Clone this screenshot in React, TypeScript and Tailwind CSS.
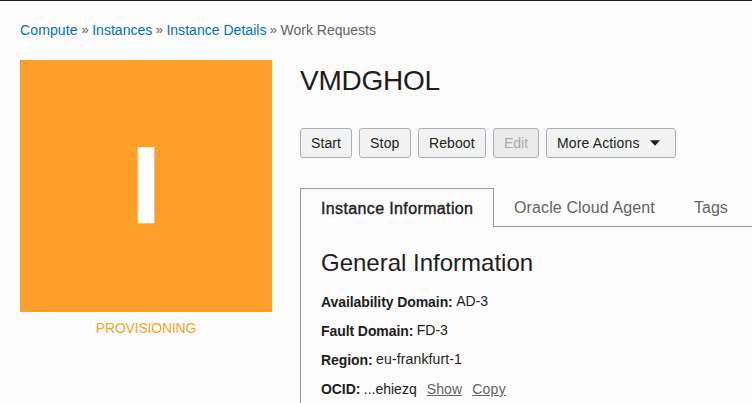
import React from "react";

const crumbs = [
  { name: "Compute", className: "w-[58px] tracking-[0.12px]" },
  { name: "Instances", className: "w-[60px] tracking-[0.03px]" },
  { name: "Instance Details", className: "w-[100px] tracking-[0.03px]" },
];

const buttonBase =
  "flex h-[30px] items-center rounded-[3px] border border-[#a7b2bc] pl-[10px] text-sm leading-4";

function Breadcrumbs() {
  return (
    <nav className="flex h-4 items-center whitespace-pre text-sm leading-4 text-[#666461]">
      {crumbs.map((crumb) => (
        <React.Fragment key={crumb.name}>
          <a className={`text-[#0070c4] ${crumb.className}`}>{crumb.name}</a>
          <span className="w-[14.2px] text-center text-[13px]">»</span>
        </React.Fragment>
      ))}
      <span>Work Requests</span>
    </nav>
  );
}

function InstanceBadge() {
  return (
    <aside className="w-[252px] shrink-0">
      <div className="flex h-[252px] items-center justify-center bg-[#fc9e28] pb-[2px]">
        <span className="text-[110px] font-bold leading-[126px] text-white [-webkit-text-stroke:0.7px_white]">
          I
        </span>
      </div>
      <div className="mt-2 text-center text-sm leading-4 tracking-[-0.2px] text-[#f9a429]">
        PROVISIONING
      </div>
    </aside>
  );
}

function Actions() {
  return (
    <div className="mt-[29px] flex">
      <button className={`${buttonBase} w-[52px] bg-[#f2f2f2] tracking-[0.1px]`}>Start</button>
      <button className={`${buttonBase} ml-[7px] w-[52px] bg-[#f2f2f2] tracking-[0.2px]`}>Stop</button>
      <button className={`${buttonBase} ml-[7px] w-[68px] bg-[#f2f2f2] tracking-[0.1px]`}>Reboot</button>
      <button className={`${buttonBase} ml-[7px] w-[46px] bg-[#ebebeb] text-[#aaaaaa]`} disabled>
        Edit
      </button>
      <button className={`${buttonBase} ml-[7px] w-[130px] bg-[#f2f2f2]`}>
        <span className="w-[93px] text-left tracking-[0.14px]">More Actions</span>
        <svg width="10" height="6" viewBox="0 0 10 6">
          <path d="M0 0.3H10L5 5.7Z" fill="#201e1c" />
        </svg>
      </button>
    </div>
  );
}

function Tabs() {
  return (
    <div className="mt-[30px] flex h-[39px] leading-[18px] text-[#666461]">
      <div className="w-[194px] border-l border-r border-t border-[#9b9b9b] pl-5 pt-[11px] text-[#201e1c]">
        <span className="tracking-[0.37px] [-webkit-text-stroke:0.4px_#201e1c]">
          Instance Information
        </span>
      </div>
      <div className="flex flex-1 border-b border-[#9b9b9b] pl-5 pt-[11px]">
        <span className="w-[180px] tracking-[0.12px]">Oracle Cloud Agent</span>
        <span>Tags</span>
      </div>
    </div>
  );
}

function Field({
  label,
  className = "",
  children,
}: {
  label: string;
  className?: string;
  children: React.ReactNode;
}) {
  return (
    <div className="flex h-[29px] items-start whitespace-pre text-sm leading-4">
      <span className="mt-px font-bold tracking-[-0.08px]">{label}</span>
      <span className={`ml-[3.5px] ${className}`}>{children}</span>
    </div>
  );
}

export default function App() {
  return (
    <div className="h-[403px] w-[752px] overflow-hidden border-t border-[#181b2a] bg-[#fbfbfb] pl-5 pt-[21px] font-['Liberation_Sans',Arial,sans-serif] text-[#201e1c]">
      <Breadcrumbs />
      <div className="mt-[22px] flex">
        <InstanceBadge />
        <main className="ml-7 min-w-0 flex-1">
          <h1 className="mt-1 h-[35px] text-[28px] leading-[33px] tracking-[-0.25px]">VMDGHOL</h1>
          <Actions />
          <Tabs />
          <section className="h-[200px] border-l border-[#9b9b9b] pl-5 pt-[22px]">
            <h2 className="h-[28px] text-2xl leading-[28px]">General Information</h2>
            <div className="mt-[16px]">
              <Field label="Availability Domain:">AD-3</Field>
              <Field label="Fault Domain:">FD-3</Field>
              <Field label="Region:" className="tracking-[0.14px]">eu-frankfurt-1</Field>
              <Field label="OCID:" className="mt-px">
                ...ehiezq
                <a className="ml-[10px] tracking-[0.1px] text-[#666461] underline">Show</a>
                <a className="ml-[10px] tracking-[0.3px] text-[#666461] underline">Copy</a>
              </Field>
            </div>
          </section>
        </main>
      </div>
    </div>
  );
}
